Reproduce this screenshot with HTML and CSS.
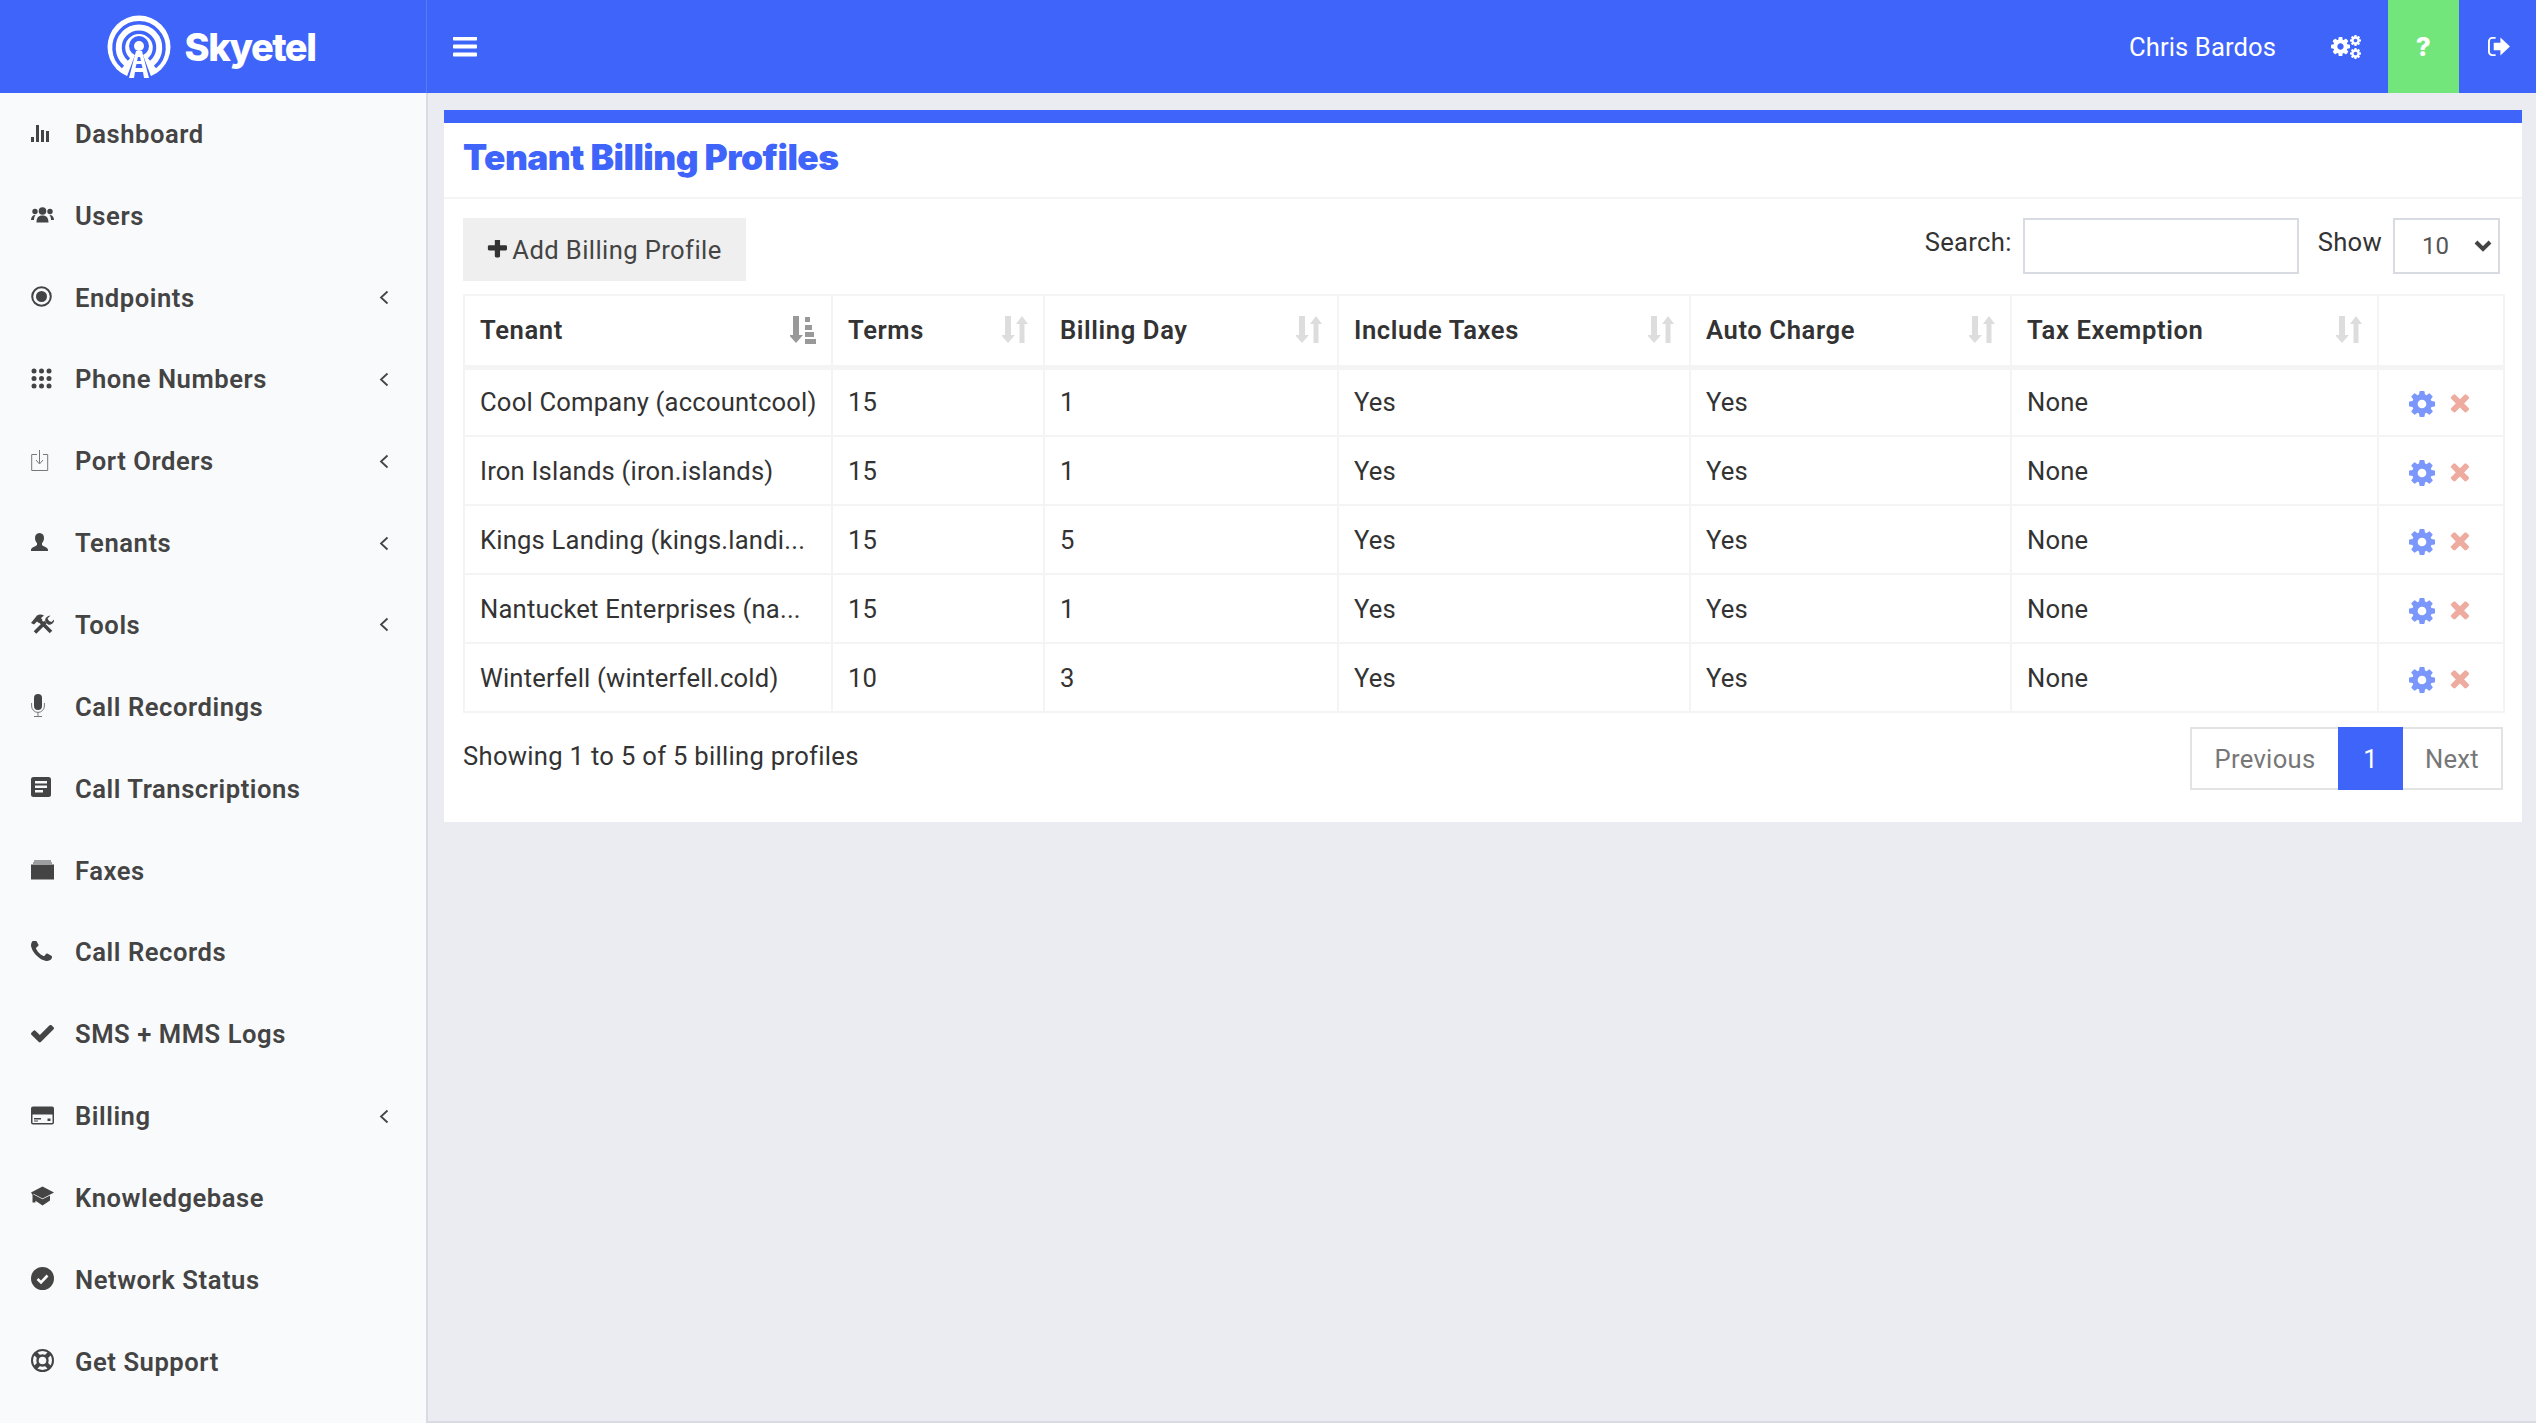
FILE: index.html
```html
<!DOCTYPE html>
<html lang="en">
<head>
    <meta charset="UTF-8">
    <title>Tenant Billing Profiles</title>
    <link rel="stylesheet" href="styles.css">
</head>
<body>
    <svg class="defs" aria-hidden="true">
        <symbol id="i-cog" viewBox="128 128 1536 1536"><path d="M1152 896q0-106-75-181t-181-75-181 75-75 181 75 181 181 75 181-75 75-181zm512-109v222q0 12-8 23t-20 13l-185 28q-19 54-39 91 35 50 107 138 10 12 10 25t-9 23q-27 37-99 108t-94 71q-12 0-26-9l-138-108q-44 23-91 38-16 136-29 186-7 28-36 28h-222q-14 0-24.5-8.5t-11.5-21.5l-28-184q-49-16-90-37l-141 107q-10 9-25 9-14 0-25-11-126-114-165-168-7-10-7-23 0-12 8-23 15-21 51-66.5t54-70.5q-27-50-41-99l-183-27q-13-2-21-12.5t-8-23.5v-222q0-12 8-23t19-13l186-28q14-46 39-92-40-57-107-138-10-12-10-24 0-10 9-23 26-36 98.5-107.5t94.5-71.5q13 0 26 10l138 107q44-23 91-38 16-136 29-186 7-28 36-28h222q14 0 24.5 8.5t11.5 21.5l28 184q49 16 90 37l142-107q9-9 24-9 13 0 25 10 129 119 165 170 7 8 7 22 0 12-8 23-15 21-51 66.5t-54 70.5q26 50 41 98l183 28q13 2 21 12.5t8 23.5z"/></symbol>
        <symbol id="i-times" viewBox="250 350 1300 1300"><path d="M1490 1322q0 40-28 68l-136 136q-28 28-68 28t-68-28l-294-294-294 294q-28 28-68 28t-68-28l-136-136q-28-28-28-68t28-68l294-294-294-294q-28-28-28-68t28-68l136-136q28-28 68-28t68 28l294 294 294-294q28-28 68-28t68 28l136 136q28 28 28 68t-28 68l-294 294 294 294q28 28 28 68z"/></symbol>
        <symbol id="i-chev" viewBox="0 0 10 15"><path d="M8.500 1.500 2 7.500l6.500 6" fill="none" stroke="currentColor" stroke-width="1.800"/></symbol>
        <symbol id="i-sort" viewBox="0 0 26 28"><path d="M3 0h6v19h4l-7 8-7-8h4z"/><path d="M20 0l6 8h-3.500v19h-5V8H14z"/></symbol>
    </svg>

    <header class="topbar">
        <div class="brand">
            <svg class="brand-logo" viewBox="0 0 64 64">
                <circle cx="32" cy="32" r="31.500" fill="#fff"/>
                <path d="M16 52A25 25 0 1 1 48 52M22 44.500A15.500 15.500 0 1 1 42 44.500" fill="none" stroke="#3f64f9" stroke-width="3.500"/>
                <circle cx="32" cy="31" r="10" fill="#3f64f9"/>
                <path d="M28 40h8l9 24H19z" fill="#3f64f9"/>
                <circle cx="32" cy="31" r="5" fill="#fff"/>
                <path d="M29 36h6l7 27h-5l-1-6h-8l-1 6h-5zM31 42l-1 4h4l-1-4zM29.500 49l-1 4h7l-1-4z" fill="#fff"/>
            </svg>
            <span class="brand-name">Skyetel</span>
        </div>
        <button class="menu-toggle" aria-label="Menu">
            <svg viewBox="128 300 1536 1250"><path d="M1664 1344v128q0 26-19 45t-45 19h-1408q-26 0-45-19t-19-45v-128q0-26 19-45t45-19h1408q26 0 45 19t19 45zm0-512v128q0 26-19 45t-45 19h-1408q-26 0-45-19t-19-45v-128q0-26 19-45t45-19h1408q26 0 45 19t19 45zm0-512v128q0 26-19 45t-45 19h-1408q-26 0-45-19t-19-45v-128q0-26 19-45t45-19h1408q26 0 45 19t19 45z"/></svg>
        </button>
        <div class="topbar-right">
            <span class="user-name">Chris Bardos</span>
            <span class="gears">
                <svg class="gear-big"><use href="#i-cog"/></svg>
                <span class="gear-small">
                    <svg><use href="#i-cog"/></svg>
                    <svg><use href="#i-cog"/></svg>
                </span>
            </span>
            <a class="help-btn">?</a>
            <a class="logout-btn">
                <svg viewBox="0 0 24 22"><path d="M9 2H5.500A3.500 3.500 0 0 0 2 5.500v11A3.500 3.500 0 0 0 5.500 20H9" fill="none" stroke="#fff" stroke-width="2"/><path d="M14 1.500 24 11 14 20.500V15H7V7h7z" fill="#fff"/></svg>
            </a>
        </div>
    </header>

    <div class="layout">
        <nav class="sidebar">
            <a class="nav-item"><svg class="nav-icon" viewBox="0 0 21 21"><path d="M0 15h3v5H0zM5 3h3v17H5zM10 8h3v12h-3zM15 9h3v11h-3z"/></svg><span>Dashboard</span></a>
            <a class="nav-item"><svg class="nav-icon wide" viewBox="0 0 23 20"><circle cx="11.500" cy="6.500" r="3.800"/><circle cx="4" cy="7" r="2.700"/><circle cx="19" cy="7" r="2.700"/><path d="M5.500 18c0-6 3-7 6-7s6 1 6 7zM0 15.500c0-3 1.500-5 4.500-5-1 1.200-1.500 3-1.500 5zM23 15.500c0-3-1.500-5-4.500-5 1 1.200 1.500 3 1.500 5z"/></svg><span>Users</span></a>
            <a class="nav-item"><svg class="nav-icon" viewBox="0 0 21 21"><circle cx="10.500" cy="10.500" r="9.300" fill="none" stroke="currentColor" stroke-width="2"/><circle cx="10.500" cy="10.500" r="5.500"/></svg><span>Endpoints</span><svg class="nav-chev"><use href="#i-chev"/></svg></a>
            <a class="nav-item"><svg class="nav-icon" viewBox="0 0 21 21"><circle cx="3" cy="3" r="2.500"/><circle cx="10.500" cy="3" r="2.500"/><circle cx="18" cy="3" r="2.500"/><circle cx="3" cy="10.500" r="2.500"/><circle cx="10.500" cy="10.500" r="2.500"/><circle cx="18" cy="10.500" r="2.500"/><circle cx="3" cy="18" r="2.500"/><circle cx="10.500" cy="18" r="2.500"/><circle cx="18" cy="18" r="2.500"/></svg><span>Phone Numbers</span><svg class="nav-chev"><use href="#i-chev"/></svg></a>
            <a class="nav-item"><svg class="nav-icon" viewBox="0 0 21 21"><path d="M6 4.500H.7v16h16v-16H12M8.500 0v13M5 10l3.500 4 3.500-4" fill="none" stroke="#777" stroke-width="1"/></svg><span>Port Orders</span><svg class="nav-chev"><use href="#i-chev"/></svg></a>
            <a class="nav-item"><svg class="nav-icon" viewBox="0 0 21 21"><path d="M8.500 1c3 0 4.500 2.200 4.500 5 0 2.500-1 4-2 5v2c1 1.500 6 2 6 5v1H0v-1c0-3 5-3.500 6-5v-2c-1-1-2-2.500-2-5 0-2.800 1.500-5 4.500-5z"/></svg><span>Tenants</span><svg class="nav-chev"><use href="#i-chev"/></svg></a>
            <a class="nav-item"><svg class="nav-icon wide" viewBox="0 0 23 20"><path d="M20 18.500 8 6.500M4 19 14.500 8.500" fill="none" stroke="currentColor" stroke-width="3.600"/><path d="M0 9.500 6 2c2-1.500 4.500-1.500 7 0L10 4.500l1.500 2-3.500 3-2-1.500L3 11z"/><path d="M14.500 8.500c-1.200-3 .8-6 5-6.500l-3 3 1.500 2.500 2.500 1 3-3c-.2 4-3.500 6.500-6.500 5.500z"/></svg><span>Tools</span><svg class="nav-chev"><use href="#i-chev"/></svg></a>
            <a class="nav-item"><svg class="nav-icon tall" viewBox="0 0 21 23"><rect x="3" y="0" width="8" height="16" rx="4"/><path d="M.6 9v3a6.400 6.400 0 0 0 12.800 0V9M7 18v4.500M3 22.500h8" fill="none" stroke="#777" stroke-width="1"/></svg><span>Call Recordings</span></a>
            <a class="nav-item"><svg class="nav-icon" viewBox="0 0 21 21"><path d="M2.500 0h15A2.500 2.500 0 0 1 20 2.500v15a2.500 2.500 0 0 1-2.500 2.500h-15A2.500 2.500 0 0 1 0 17.500v-15A2.500 2.500 0 0 1 2.500 0zM4 4v2.500h12V4zM4 8.500V11h12V8.500zM4 13v2.500h8V13z" fill-rule="evenodd"/></svg><span>Call Transcriptions</span></a>
            <a class="nav-item"><svg class="nav-icon wide" viewBox="0 0 23 20"><path d="M0 5h23v15H0zM2 3h19v1H2zM3 1h17v1H3z"/></svg><span>Faxes</span></a>
            <a class="nav-item"><svg class="nav-icon" viewBox="192 192 1408 1408"><path d="M1600 1240q0 27-10 70.500t-21 68.500q-21 50-122 106-94 51-186 51-27 0-53-3.500t-57.500-12.500-47-14.500-55.500-20.500-49-18q-98-35-175-83-127-79-264-216t-216-264q-48-77-83-175-3-9-18-49t-20.500-55.500-14.500-47-12.500-57.500-3.500-53q0-92 51-186 56-101 106-122 25-11 68.500-21t70.500-10q14 0 21 3 18 6 53 76 11 19 30 54t35 63.500 31 53.500q3 4 17.500 25t21.500 35.500 7 28.500q0 20-28.500 50t-62 55-62 53-28.500 46q0 9 5 22.500t8.500 20.500 14 24 11.500 19q76 137 174 235t235 174q2 1 19 11.500t24 14 20.500 8.500 22.500 5q18 0 46-28.500t53-62 55-62 50-28.500q14 0 28.500 7t35.500 21.500 25 17.500q25 15 53.500 31t63.500 35 54 30q70 35 76 53 3 7 3 21z"/></svg><span>Call Records</span></a>
            <a class="nav-item"><svg class="nav-icon round" viewBox="121 300 1550 1230"><path d="M1671 566q0 40-28 68l-724 724-136 136q-28 28-68 28t-68-28l-136-136-362-362q-28-28-28-68t28-68l136-136q28-28 68-28t68 28l294 295 656-657q28-28 68-28t68 28l136 136q28 28 28 68z"/></svg><span>SMS + MMS Logs</span></a>
            <a class="nav-item"><svg class="nav-icon wide" viewBox="0 0 23 18"><path d="M2 0h19a2 2 0 0 1 2 2v14a2 2 0 0 1-2 2H2a2 2 0 0 1-2-2V2a2 2 0 0 1 2-2zM1.500 8v8q0 .5.500.5h19q.5 0 .5-.5V8zM3 11.500h7V13H3zM3 14h4v1H3zM16.500 12h3v2.500h-3z" fill-rule="evenodd"/></svg><span>Billing</span><svg class="nav-chev"><use href="#i-chev"/></svg></a>
            <a class="nav-item"><svg class="nav-icon wide" viewBox="0 0 23 20"><path d="M11.500 0 23 6 11.500 12 2.500 7.300V8L11.500 12.700 19 9v5l-7.500 5-7-4.800V16H1.500v-7.800L0 6z"/></svg><span>Knowledgebase</span></a>
            <a class="nav-item"><svg class="nav-icon round" viewBox="0 0 23 23"><circle cx="11.500" cy="11.500" r="11.500"/><path d="M6.500 12l3.500 3.500 6.500-7" fill="none" stroke="#f9fafc" stroke-width="2.600"/></svg><span>Network Status</span></a>
            <a class="nav-item"><svg class="nav-icon round" viewBox="0 0 23 23"><circle cx="11.500" cy="11.500" r="10.500" fill="none" stroke="currentColor" stroke-width="2"/><circle cx="11.500" cy="11.500" r="5" fill="none" stroke="currentColor" stroke-width="2.400"/><path d="M4 4l4 4M19 4l-4 4M4 19l4-4M19 19l-4-4" stroke="currentColor" stroke-width="4.500"/></svg><span>Get Support</span></a>
        </nav>

        <main class="content">
            <section class="card">
                <h1 class="card-title">Tenant Billing Profiles</h1>
                <div class="card-body">
                    <div class="toolbar">
                        <button class="btn-add">
                            <svg viewBox="128 256 1472 1472"><path d="M1600 736v192q0 40-28 68t-68 28h-416v416q0 40-28 68t-68 28h-192q-40 0-68-28t-28-68v-416h-416q-40 0-68-28t-28-68v-192q0-40 28-68t68-28h416v-416q0-40 28-68t68-28h192q40 0 68 28t28 68v416h416q40 0 68 28t28 68z"/></svg>
                            Add Billing Profile
                        </button>
                        <div class="filters">
                            <label class="filter-label" for="search">Search:</label>
                            <input class="search-input" id="search" type="text">
                            <label class="filter-label" for="show">Show</label>
                            <div class="select-wrap">
                                <select class="show-select" id="show"><option>10</option></select>
                                <svg class="select-arrow" viewBox="0 0 18 12"><path d="M2 2l7 7 7-7" fill="none" stroke="#444" stroke-width="4"/></svg>
                            </div>
                        </div>
                    </div>

                    <table class="data-table">
                        <colgroup>
                            <col class="col-tenant"><col class="col-terms"><col class="col-day"><col class="col-taxes"><col class="col-charge"><col class="col-exempt"><col class="col-actions">
                        </colgroup>
                        <thead>
                            <tr>
                                <th><div class="th-inner">Tenant
                                    <svg class="sort-active" viewBox="0 0 26 28"><path d="M3 0h6v19h4l-7 8-7-8h4z"/><path d="M15 1h5v5h-5zM15 9h7v5h-7zM15 16h9v5h-9zM15 23h11v5H15z"/></svg>
                                </div></th>
                                <th><div class="th-inner">Terms <svg class="sort-icon"><use href="#i-sort"/></svg></div></th>
                                <th><div class="th-inner">Billing Day <svg class="sort-icon"><use href="#i-sort"/></svg></div></th>
                                <th><div class="th-inner">Include Taxes <svg class="sort-icon"><use href="#i-sort"/></svg></div></th>
                                <th><div class="th-inner">Auto Charge <svg class="sort-icon"><use href="#i-sort"/></svg></div></th>
                                <th><div class="th-inner">Tax Exemption <svg class="sort-icon"><use href="#i-sort"/></svg></div></th>
                                <th></th>
                            </tr>
                        </thead>
                        <tbody>
                            <tr>
                                <td>Cool Company (accountcool)</td><td>15</td><td>1</td><td>Yes</td><td>Yes</td><td>None</td>
                                <td class="actions"><svg class="act-edit"><use href="#i-cog"/></svg><svg class="act-delete"><use href="#i-times"/></svg></td>
                            </tr>
                            <tr>
                                <td>Iron Islands (iron.islands)</td><td>15</td><td>1</td><td>Yes</td><td>Yes</td><td>None</td>
                                <td class="actions"><svg class="act-edit"><use href="#i-cog"/></svg><svg class="act-delete"><use href="#i-times"/></svg></td>
                            </tr>
                            <tr>
                                <td>Kings Landing (kings.landi...</td><td>15</td><td>5</td><td>Yes</td><td>Yes</td><td>None</td>
                                <td class="actions"><svg class="act-edit"><use href="#i-cog"/></svg><svg class="act-delete"><use href="#i-times"/></svg></td>
                            </tr>
                            <tr>
                                <td>Nantucket Enterprises (na...</td><td>15</td><td>1</td><td>Yes</td><td>Yes</td><td>None</td>
                                <td class="actions"><svg class="act-edit"><use href="#i-cog"/></svg><svg class="act-delete"><use href="#i-times"/></svg></td>
                            </tr>
                            <tr>
                                <td>Winterfell (winterfell.cold)</td><td>10</td><td>3</td><td>Yes</td><td>Yes</td><td>None</td>
                                <td class="actions"><svg class="act-edit"><use href="#i-cog"/></svg><svg class="act-delete"><use href="#i-times"/></svg></td>
                            </tr>
                        </tbody>
                    </table>

                    <div class="table-footer">
                        <span class="table-info">Showing 1 to 5 of 5 billing profiles</span>
                        <div class="pagination">
                            <a class="page-link page-prev">Previous</a>
                            <a class="page-link active">1</a>
                            <a class="page-link page-next">Next</a>
                        </div>
                    </div>
                </div>
            </section>
        </main>
    </div>
</body>
</html>
```

FILE: styles.css
```css
* {
    box-sizing: border-box;
}
body {
    margin: 0;
    height: 100vh;
    overflow: hidden;
    display: flex;
    flex-direction: column;
    background-color: #fff;
    color: #333;
    font-family: 'Roboto', 'Noto Sans', sans-serif;
    font-size: 25.6px;
    letter-spacing: 0.3px;
}
.defs {
    display: none;
}

/* Barra superior */
.topbar {
    height: 93px;
    flex-shrink: 0;
    display: flex;
    align-items: center;
    background-color: #3f64f9;
    color: #fff;
}
.brand {
    width: 427px;
    height: 100%;
    display: flex;
    align-items: center;
    justify-content: center;
    gap: 14px;
    padding-right: 4px;
    border-right: 1px solid #5a7af5;
}
.brand-logo {
    width: 64px;
    height: 64px;
}
.brand-name {
    font-family: 'Inter', sans-serif;
    font-weight: 800;
    font-size: 38px;
    letter-spacing: -1.5px;
}
.menu-toggle {
    width: 24px;
    height: 20px;
    margin-left: 26px;
    padding: 0;
    border: none;
    background: none;
    display: flex;
}
.menu-toggle svg {
    width: 24px;
    height: 20px;
    fill: #fff;
}
.topbar-right {
    margin-left: auto;
    height: 100%;
    display: flex;
    align-items: center;
}
.user-name {
    margin-right: 55px;
    letter-spacing: 0.1px;
}
.gears {
    display: flex;
    align-items: center;
    margin-right: 27px;
}
.gear-big {
    width: 19px;
    height: 19px;
    fill: #fff;
}
.gear-small {
    display: flex;
    flex-direction: column;
    gap: 2px;
}
.gear-small svg {
    width: 11px;
    height: 11px;
    fill: #fff;
    display: block;
}
.help-btn {
    width: 71px;
    height: 100%;
    display: flex;
    align-items: center;
    justify-content: center;
    background-color: #72e67a;
    font-family: 'Inter', sans-serif;
    font-weight: 800;
    font-size: 26px;
}
.logout-btn {
    width: 77px;
    display: flex;
    justify-content: flex-end;
    padding-right: 26px;
}
.logout-btn svg {
    width: 23px;
    height: 21px;
}

/* Menu lateral */
.layout {
    flex: 1;
    display: flex;
    min-height: 0;
    margin-bottom: 3px;
}
.sidebar {
    width: 428px;
    flex-shrink: 0;
    background-color: #f9fafc;
    border-right: 2px solid #d8dbe4;
}
.nav-item {
    height: 81.85px;
    display: flex;
    align-items: center;
    padding: 0 37px 0 31px;
    color: #444;
    font-weight: 600;
    letter-spacing: 0.55px;
}
.nav-icon {
    width: 21px;
    height: 21px;
    margin-right: 23px;
    fill: #444;
    color: #444;
    flex-shrink: 0;
    position: relative;
    top: -1px;
}
.nav-icon.wide {
    width: 23px;
    margin-right: 21px;
}
.nav-icon.tall {
    height: 23px;
}
.nav-icon.round {
    width: 23px;
    height: 23px;
    margin-right: 21px;
}
.nav-chev {
    width: 10px;
    height: 15px;
    margin-left: auto;
    color: #444;
}

/* Conteudo */
.content {
    flex: 1;
    min-width: 0;
    padding: 17px 14px 0 16px;
    background-color: #eaecf1;
    border-bottom: 2px solid #d8dbe4;
}
.card {
    background-color: #fff;
    border-top: 13px solid #3f64f9;
}
.card-title {
    margin: 0;
    height: 76px;
    padding: 0 19px 6px;
    display: flex;
    align-items: center;
    border-bottom: 2px solid #f4f4f5;
    color: #3f64f9;
    font-family: 'Inter', sans-serif;
    font-weight: 900;
    font-size: 35.3px;
    letter-spacing: -0.5px;
}
.card-body {
    padding: 19px 19px 32px 19px;
}
.toolbar {
    display: flex;
    justify-content: space-between;
    align-items: flex-start;
    margin-bottom: 13px;
}
.btn-add {
    width: 283px;
    height: 63px;
    display: flex;
    align-items: center;
    justify-content: center;
    gap: 5px;
    border: none;
    background-color: #efefef;
    color: #444;
    font-family: inherit;
    font-size: 25.6px;
    letter-spacing: 0.4px;
}
.btn-add svg {
    width: 20px;
    height: 20px;
    fill: #333;
}
.filters {
    display: flex;
    align-items: center;
    margin-right: 3px;
}
.filter-label {
    position: relative;
    top: -4px;
    margin-right: 11px;
}
.search-input {
    width: 276px;
    height: 56px;
    margin-right: 19px;
    border: 2px solid #d8dbe2;
    background-color: #fff;
}
.select-wrap {
    position: relative;
    display: flex;
}
.show-select {
    width: 107px;
    height: 56px;
    padding-left: 27px;
    appearance: none;
    border: 2px solid #d8dbe2;
    border-radius: 0;
    background-color: #fff;
    color: #555;
    font-family: inherit;
    font-size: 24px;
}
.select-arrow {
    position: absolute;
    right: 8px;
    top: 22px;
    width: 18px;
    height: 12px;
    pointer-events: none;
}

/* Tabela */
.data-table {
    width: 100%;
    table-layout: fixed;
    border-collapse: collapse;
}
.col-tenant { width: 368px; }
.col-terms { width: 212px; }
.col-day { width: 294px; }
.col-taxes { width: 352px; }
.col-charge { width: 321px; }
.col-exempt { width: 367px; }
.col-actions { width: 126px; }
.data-table th,
.data-table td {
    border: 2px solid #f4f4f5;
    padding: 0 15px;
    text-align: left;
    white-space: nowrap;
}
.data-table th {
    height: 72px;
    border-bottom-width: 5px;
    font-weight: 600;
    letter-spacing: 0.6px;
    color: #333;
}
.data-table td {
    height: 69px;
    font-weight: 400;
    letter-spacing: 0.2px;
}
.th-inner {
    display: flex;
    align-items: center;
    justify-content: space-between;
}
.sort-icon,
.sort-active {
    width: 26px;
    height: 28px;
}
.sort-active {
    fill: #999;
}
.sort-icon {
    fill: #ddd;
}
.actions svg {
    display: inline-block;
    vertical-align: middle;
}
.data-table .actions {
    padding: 0 0 0 30px;
}
.act-edit {
    width: 26px;
    height: 26px;
    fill: #7b97fb;
    margin-right: 15px;
}
.act-delete {
    width: 20px;
    height: 20px;
    fill: #edac9f;
}

/* Rodape da tabela */
.table-footer {
    display: flex;
    justify-content: space-between;
    align-items: flex-start;
    margin-top: 14px;
}
.table-info {
    margin-top: 14px;
}
.pagination {
    display: flex;
    height: 63px;
}
.page-link {
    height: 100%;
    display: flex;
    align-items: center;
    justify-content: center;
    border: 2px solid #e2e3e5;
    color: #777;
}
.page-prev {
    width: 148px;
    border-right: none;
}
.page-link.active {
    width: 65px;
    background-color: #3f64f9;
    border-color: #3f64f9;
    color: #fff;
}
.page-next {
    width: 100px;
    border-left: none;
}
```
